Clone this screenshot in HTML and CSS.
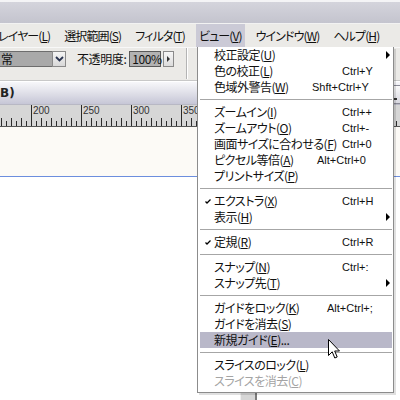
FILE: index.html
```html
<!DOCTYPE html>
<html lang="ja">
<head>
<meta charset="utf-8">
<title>ビュー メニュー</title>
<link rel="stylesheet" href="styles.css">
</head>
<body>
<div class="screen">
  <div class="apptitle"></div>
  <nav class="menubar">
    <span class="mb first">レイヤー(<u>L</u>)</span>
    <span class="mb">選択範囲(<u>S</u>)</span>
    <span class="mb">フィルタ(<u>T</u>)</span>
    <span class="mb open">ビュー(<u>V</u>)</span>
    <span class="mb">ウインドウ(<u>W</u>)</span>
    <span class="mb">ヘルプ(<u>H</u>)</span>
  </nav>
  <div class="toolbar">
    <div class="combo">
      <span class="combo-val">常</span>
      <span class="combo-btn"><svg width="9" height="6" viewBox="0 0 9 6"><polyline points="1,1 4.5,4.5 8,1" fill="none" stroke="#2a3450" stroke-width="1.8"/></svg></span>
    </div>
    <span class="tlabel">不透明度:</span>
    <div class="num">100%</div>
    <span class="num-btn"><span class="tri-s"></span></span>
    <span class="tsep"></span>
  </div>
  <div class="doc">
    <div class="doc-title">
      <span class="doc-name">B)</span>
      <span class="min-btn"><span class="min-line"></span></span>
    </div>
    <div class="ruler">
      <span class="rl">200</span>
      <span class="rl">250</span>
      <span class="rl">300</span>
      <span class="rl">350</span>
    </div>
    <div class="canvas">
      <div class="pasteboard"></div>
      <div class="page"></div>
    </div>
  </div>

  <div class="bin-edge"></div>

  <div class="menu">
    <div class="mi"><span class="chk"></span><span class="lbl">校正設定(<u>U</u>)</span><span class="sc"></span><span class="arr"><span class="tri"></span></span></div>
    <div class="mi"><span class="chk"></span><span class="lbl">色の校正(<u>L</u>)</span><span class="sc">Ctrl+Y</span><span class="arr"></span></div>
    <div class="mi"><span class="chk"></span><span class="lbl">色域外警告(<u>W</u>)</span><span class="sc sc-shft">Shft+Ctrl+Y</span><span class="arr"></span></div>
    <div class="msep"></div>
    <div class="mi"><span class="chk"></span><span class="lbl">ズームイン(<u>I</u>)</span><span class="sc">Ctrl++</span><span class="arr"></span></div>
    <div class="mi"><span class="chk"></span><span class="lbl">ズームアウト(<u>O</u>)</span><span class="sc">Ctrl+-</span><span class="arr"></span></div>
    <div class="mi"><span class="chk"></span><span class="lbl">画面サイズに合わせる(<u>F</u>)</span><span class="sc">Ctrl+0</span><span class="arr"></span></div>
    <div class="mi"><span class="chk"></span><span class="lbl">ピクセル等倍(<u>A</u>)</span><span class="sc sc-alt0">Alt+Ctrl+0</span><span class="arr"></span></div>
    <div class="mi"><span class="chk"></span><span class="lbl">プリントサイズ(<u>P</u>)</span><span class="sc"></span><span class="arr"></span></div>
    <div class="msep"></div>
    <div class="mi"><span class="chk"><svg width="6" height="5" viewBox="0 0 6 5"><polyline points="0.5,2.5 2,4 5.5,0.5" fill="none" stroke="#000" stroke-width="1.3"/></svg></span><span class="lbl">エクストラ(<u>X</u>)</span><span class="sc">Ctrl+H</span><span class="arr"></span></div>
    <div class="mi"><span class="chk"></span><span class="lbl">表示(<u>H</u>)</span><span class="sc"></span><span class="arr"><span class="tri"></span></span></div>
    <div class="msep"></div>
    <div class="mi"><span class="chk"><svg width="6" height="5" viewBox="0 0 6 5"><polyline points="0.5,2.5 2,4 5.5,0.5" fill="none" stroke="#000" stroke-width="1.3"/></svg></span><span class="lbl">定規(<u>R</u>)</span><span class="sc">Ctrl+R</span><span class="arr"></span></div>
    <div class="msep"></div>
    <div class="mi"><span class="chk"></span><span class="lbl">スナップ(<u>N</u>)</span><span class="sc">Ctrl+:</span><span class="arr"></span></div>
    <div class="mi"><span class="chk"></span><span class="lbl">スナップ先(<u>T</u>)</span><span class="sc"></span><span class="arr"><span class="tri"></span></span></div>
    <div class="msep"></div>
    <div class="mi"><span class="chk"></span><span class="lbl">ガイドをロック(<u>K</u>)</span><span class="sc sc-altsemi">Alt+Ctrl+;</span><span class="arr"></span></div>
    <div class="mi"><span class="chk"></span><span class="lbl">ガイドを消去(<u>S</u>)</span><span class="sc"></span><span class="arr"></span></div>
    <div class="mi hot"><span class="chk"></span><span class="lbl">新規ガイド(<u>E</u>)...</span><span class="sc"></span><span class="arr"></span></div>
    <div class="msep"></div>
    <div class="mi"><span class="chk"></span><span class="lbl">スライスのロック(<u>L</u>)</span><span class="sc"></span><span class="arr"></span></div>
    <div class="mi off"><span class="chk"></span><span class="lbl">スライスを消去(<u>C</u>)</span><span class="sc"></span><span class="arr"></span></div>
  </div>

  <svg class="cursor" width="13" height="21" viewBox="0 0 13 21">
    <path d="M0.5,0.5 V16.5 L4.2,12.8 L6.8,19 L9.2,18 L6.7,12 H11.5 Z" fill="#fff" stroke="#000" stroke-width="1" stroke-linejoin="miter"/>
  </svg>
</div>
</body>
</html>
```

FILE: styles.css
```css
* { box-sizing: border-box; margin: 0; padding: 0; }
html, body { width: 400px; height: 400px; overflow: hidden; }
body {
  font-family: "Noto Sans CJK JP", "Noto Sans", sans-serif;
  font-size: 12px;
  color: #111;
  background: #fff;
  font-feature-settings: "palt";
}
u { text-decoration: underline; text-underline-offset: 1px; }

.screen {
  position: relative;
  width: 400px;
  height: 400px;
  overflow: hidden;
  display: flex;
  flex-direction: column;
}

/* application title strip */
.apptitle {
  height: 24px;
  flex: none;
  border-top: 2px solid #f4f4f6;
  border-bottom: 1px solid #f2f2f2;
  background: linear-gradient(#d4d4dc, #c4c4ce);
}

/* menu bar */
.menubar {
  height: 23px;
  flex: none;
  display: flex;
  align-items: stretch;
  gap: 8px;
  background: #ebeae7;
  white-space: nowrap;
  letter-spacing: -0.9px;
}
.mb {
  display: flex;
  align-items: center;
  padding: 0 3px;
  line-height: 1;
}
.mb.first { margin-left: -5px; }
.mb.open { background: #cbcad6; }

/* tool options bar */
.toolbar {
  height: 34px;
  flex: none;
  display: flex;
  align-items: flex-start;
  padding-top: 3px;
  background: #ebeae7;
  border-top: 1px solid #f8f8f8;
  border-bottom: 1px solid #c8c8c8;
}
.combo {
  display: flex;
  height: 16px;
  margin-left: -4px;
}
.combo-val {
  width: 56px;
  padding-left: 4px;
  background: #a9a9a9;
  border: 1px solid #6d6d6d;
  border-right: none;
  line-height: 14px;
}
.combo-btn {
  width: 14px;
  display: flex;
  align-items: center;
  justify-content: center;
  background: linear-gradient(#f4f4f4, #d8d8d8);
  border: 1px solid #8a8a8a;
}
.tlabel {
  margin-left: 11px;
  line-height: 16px;
  letter-spacing: -0.4px;
}
.num {
  margin-left: 3px;
  width: 32px;
  height: 16px;
  line-height: 14px;
  padding-left: 2px;
  background: #b2b2b2;
  border: 1px solid #5a5a5a;
  letter-spacing: -0.4px;
}
.num-btn {
  margin-left: 2px;
  width: 11px;
  height: 16px;
  display: flex;
  align-items: center;
  justify-content: center;
  background: linear-gradient(#f6f6f6, #dcdcdc);
  border: 1px solid #8a8a8a;
}
.tri-s {
  width: 0; height: 0;
  border-left: 3px solid #333;
  border-top: 3px solid transparent;
  border-bottom: 3px solid transparent;
}
.tsep {
  margin-left: 12px;
  margin-top: -3px;
  width: 2px;
  height: 31px;
  border-left: 1px solid #b4b4b4;
  border-right: 1px solid #fff;
}

/* document window */
.doc {
  flex: 1;
  display: flex;
  flex-direction: column;
  margin-top: 1px;
}
.doc-title {
  height: 23px;
  flex: none;
  display: flex;
  align-items: center;
  justify-content: space-between;
  background: linear-gradient(#f7f7fa, #e2e2ea 45%, #c6c6d6);
  border-bottom: 1px solid #b8b8c4;
}
.doc-name {
  font-family: "DejaVu Sans", "Noto Sans", sans-serif;
  font-weight: bold;
  font-size: 12px;
  color: #222;
}
.min-btn {
  width: 18px;
  height: 19px;
  margin-right: -5px;
  align-self: flex-end;
  border: 1px solid #8a8a96;
  border-radius: 3px 3px 0 0;
  background: linear-gradient(#fafafa, #d8d8e0);
  display: flex;
  align-items: flex-end;
  padding: 0 0 3px 4px;
}
.min-line { width: 5px; height: 2px; background: #333; }

.ruler {
  height: 22px;
  flex: none;
  display: flex;
  padding-left: 31px;
  background:
    repeating-linear-gradient(to right, #2a2a2a 0 1px, transparent 1px 10px) 1px 100% / 100% 8px no-repeat,
    repeating-linear-gradient(to right, #2a2a2a 0 1px, transparent 1px 5px) 1px 100% / 100% 5px no-repeat,
    #d6d6d6;
  border-bottom: 1px solid #555;
}
.rl {
  width: 50px;
  flex: none;
  border-left: 1px solid #2a2a2a;
  padding-left: 1px;
  font-family: "Liberation Sans", Arial, sans-serif;
  font-size: 10px;
  line-height: 11px;
  color: #333;
  height: 100%;
}

.canvas {
  flex: 1;
  display: flex;
  flex-direction: column;
}
.pasteboard {
  height: 50px;
  flex: none;
  background: #fcfaf6;
  border-bottom: 1px solid #6c8ede;
}
.page { flex: 1; background: #fff; }

/* edge of a panel showing below the menu */
.bin-edge {
  position: absolute;
  left: 240px;
  top: 390px;
  width: 17px;
  height: 10px;
  background: #d6d6d6;
  border-left: 1px solid #eeeeee;
  border-right: 2px solid #7c7c7c;
}

/* dropdown menu */
.menu {
  position: absolute;
  left: 197px;
  top: 47px;
  width: 197px;
  background: #fff;
  border: 1px solid #8c8c8c;
  border-top: none;
  padding-bottom: 3px;
  white-space: nowrap;
  box-shadow: 2px 2px 0 rgba(0,0,0,0.12);
}
.mi {
  height: 16px;
  display: flex;
  align-items: center;
  line-height: 16px;
  margin: 0 1px 0 2px;
}
.mi.hot { background: #b9b8c9; }
.mi.off { color: #a4a4a4; }
.chk {
  width: 14px;
  flex: none;
  display: flex;
  justify-content: flex-end;
  padding-right: 3px;
}
.lbl { flex: 1; letter-spacing: -0.5px; }
.sc {
  width: 37px;
  flex: none;
  font-family: "Liberation Sans", Arial, sans-serif;
  font-size: 11px;
}
.sc-shft { text-indent: -30px; }
.sc-alt0 { text-indent: -25px; }
.sc-altsemi { text-indent: -15px; }
.arr {
  width: 13px;
  flex: none;
  display: flex;
  align-items: center;
  padding-left: 7px;
}
.tri {
  width: 0; height: 0;
  border-left: 4px solid #000;
  border-top: 4px solid transparent;
  border-bottom: 4px solid transparent;
}
.msep {
  height: 9px;
  margin: 0 1px 0 2px;
  background: linear-gradient(#a6a6a6, #a6a6a6) 0 4px / 100% 1px no-repeat;
}

/* mouse pointer */
.cursor {
  position: absolute;
  left: 328px;
  top: 339px;
}
```
